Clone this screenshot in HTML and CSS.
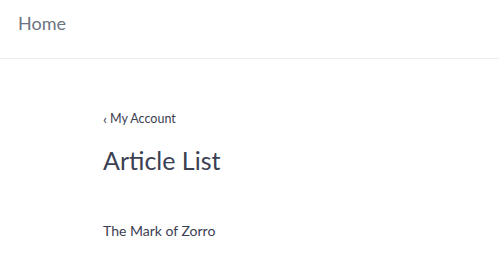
FILE: index.html
```html
<!DOCTYPE html>
<html>
<head>
<meta charset="utf-8">
<link rel="stylesheet" href="styles.css">
</head>
<body>
<header class="topbar">
  <a class="brand" href="#">Home</a>
</header>
<main class="content">
  <a class="back" href="#"><span class="chev">‹</span>My Account</a>
  <h1 class="title">Article List</h1>
  <ul class="articles">
    <li class="article">The Mark of Zorro</li>
  </ul>
</main>
</body>
</html>
```
FILE: styles.css
```css
html, body {
  margin: 0;
  padding: 0;
  background: #ffffff;
  font-family: "Lato", "Noto Sans", sans-serif;
}
.topbar {
  height: 58px;
  border-bottom: 1px solid #ececec;
  display: flex;
  align-items: center;
  padding: 0 18px;
  box-sizing: content-box;
}
.brand {
  font-size: 18px;
  color: #6c7382;
  text-decoration: none;
  margin-top: -13px;
}
.content {
  padding: 50px 103px 0;
  display: flex;
  flex-direction: column;
  align-items: flex-start;
}
.back {
  font-size: 12.5px;
  color: #3b4052;
  text-decoration: none;
  display: flex;
  align-items: center;
  gap: 3px;
}
.chev {
  font-size: 14px;
  margin-top: 1px;
}
.title {
  font-weight: 400;
  font-size: 25px;
  color: #3b4052;
  margin: 18px 0 0;
}
.articles {
  list-style: none;
  margin: 47px 0 0;
  padding: 0;
}
.article {
  font-size: 14px;
  color: #3b4052;
}
```
